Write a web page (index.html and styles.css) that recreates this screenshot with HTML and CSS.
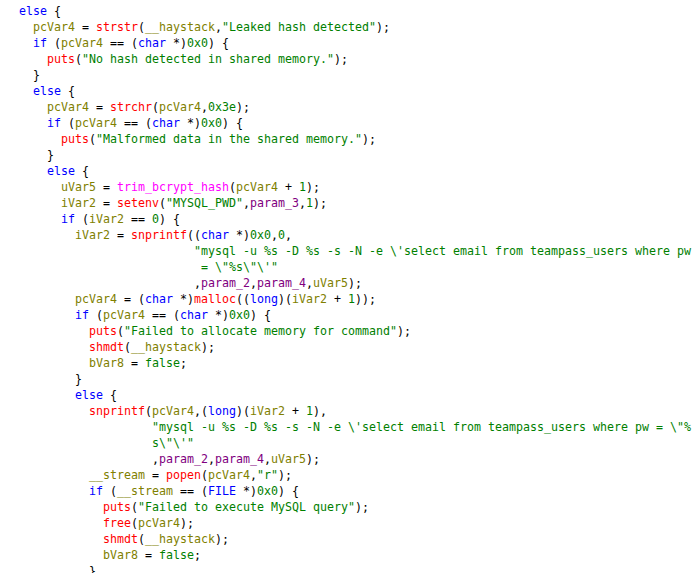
FILE: index.html
```html
<!DOCTYPE html>
<html>
<head>
<meta charset="utf-8">
<link rel="stylesheet" href="styles.css">
</head>
<body>
<div class="code">
<div class="ln"><span class="k">else</span> {</div>
<div class="ln">  <span class="v">pcVar4</span> = <span class="f">strstr</span>(<span class="v">__haystack</span>,<span class="s">"Leaked hash detected"</span>);</div>
<div class="ln">  <span class="k">if</span> (<span class="v">pcVar4</span> == (<span class="k">char</span> *)<span class="s">0x0</span>) {</div>
<div class="ln">    <span class="f">puts</span>(<span class="s">"No hash detected in shared memory."</span>);</div>
<div class="ln">  }</div>
<div class="ln">  <span class="k">else</span> {</div>
<div class="ln">    <span class="v">pcVar4</span> = <span class="f">strchr</span>(<span class="v">pcVar4</span>,<span class="s">0x3e</span>);</div>
<div class="ln">    <span class="k">if</span> (<span class="v">pcVar4</span> == (<span class="k">char</span> *)<span class="s">0x0</span>) {</div>
<div class="ln">      <span class="f">puts</span>(<span class="s">"Malformed data in the shared memory."</span>);</div>
<div class="ln">    }</div>
<div class="ln">    <span class="k">else</span> {</div>
<div class="ln">      <span class="v">uVar5</span> = <span class="u">trim_bcrypt_hash</span>(<span class="v">pcVar4</span> + <span class="s">1</span>);</div>
<div class="ln">      <span class="v">iVar2</span> = <span class="f">setenv</span>(<span class="s">"MYSQL_PWD"</span>,<span class="p">param_3</span>,<span class="s">1</span>);</div>
<div class="ln">      <span class="k">if</span> (<span class="v">iVar2</span> == <span class="s">0</span>) {</div>
<div class="ln">        <span class="v">iVar2</span> = <span class="f">snprintf</span>((<span class="k">char</span> *)<span class="s">0x0</span>,<span class="s">0</span>,</div>
<div class="ln">                         <span class="s">"mysql -u %s -D %s -s -N -e \'select email from teampass_users where pw</span></div>
<div class="ln">                         <span class="s"> = \"%s\"\'"</span></div>
<div class="ln">                         ,<span class="p">param_2</span>,<span class="p">param_4</span>,<span class="v">uVar5</span>);</div>
<div class="ln">        <span class="v">pcVar4</span> = (<span class="k">char</span> *)<span class="f">malloc</span>((<span class="k">long</span>)(<span class="v">iVar2</span> + <span class="s">1</span>));</div>
<div class="ln">        <span class="k">if</span> (<span class="v">pcVar4</span> == (<span class="k">char</span> *)<span class="s">0x0</span>) {</div>
<div class="ln">          <span class="f">puts</span>(<span class="s">"Failed to allocate memory for command"</span>);</div>
<div class="ln">          <span class="f">shmdt</span>(<span class="v">__haystack</span>);</div>
<div class="ln">          <span class="v">bVar8</span> = <span class="s">false</span>;</div>
<div class="ln">        }</div>
<div class="ln">        <span class="k">else</span> {</div>
<div class="ln">          <span class="f">snprintf</span>(<span class="v">pcVar4</span>,(<span class="k">long</span>)(<span class="v">iVar2</span> + <span class="s">1</span>),</div>
<div class="ln">                   <span class="s">"mysql -u %s -D %s -s -N -e \'select email from teampass_users where pw = \"%</span></div>
<div class="ln">                   <span class="s">s\"\'"</span></div>
<div class="ln">                   ,<span class="p">param_2</span>,<span class="p">param_4</span>,<span class="v">uVar5</span>);</div>
<div class="ln">          <span class="v">__stream</span> = <span class="f">popen</span>(<span class="v">pcVar4</span>,<span class="s">"r"</span>);</div>
<div class="ln">          <span class="k">if</span> (<span class="v">__stream</span> == (<span class="k">FILE</span> *)<span class="s">0x0</span>) {</div>
<div class="ln">            <span class="f">puts</span>(<span class="s">"Failed to execute MySQL query"</span>);</div>
<div class="ln">            <span class="f">free</span>(<span class="v">pcVar4</span>);</div>
<div class="ln">            <span class="f">shmdt</span>(<span class="v">__haystack</span>);</div>
<div class="ln">            <span class="v">bVar8</span> = <span class="s">false</span>;</div>
<div class="ln">          }</div>
</div>
</body>
</html>
```
FILE: styles.css
```css
html, body {
  margin: 0;
  padding: 0;
  background: #ffffff;
  overflow: hidden;
}

.code {
  padding: 3px 0 0 19px;
  font-family: "DejaVu Sans Mono", monospace;
  font-size: 11.63px;
  line-height: 16px;
  color: #000000;
}

.ln {
  white-space: pre;
  height: 16px;
}

.k { color: #0000ff; }
.v { color: #808000; }
.f { color: #ff0000; }
.s { color: #008000; }
.p { color: #800080; }
.u { color: #ff00ff; }
```
